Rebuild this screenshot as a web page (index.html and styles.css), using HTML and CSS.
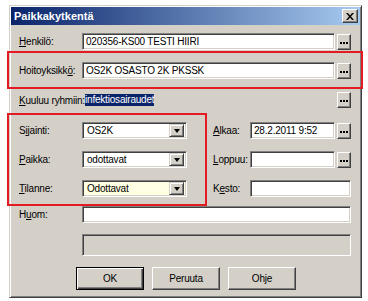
FILE: index.html
```html
<!DOCTYPE html>
<html lang="fi">
<head>
  <meta charset="UTF-8">
  <meta name="viewport" content="width=device-width, initial-scale=1.0">
  <title>Paikkakytkentä</title>
  <link rel="stylesheet" href="styles.css">
</head>
<body>
  <div class="dialog">
    <div class="titlebar">
      <span class="title">Paikkakytkentä</span>
      <span class="close-btn">
        <svg width="8" height="7" viewBox="0 0 8 7"><path d="M0 0h2l2 2.5L6 0h2L5 3.5 8 7H6L4 4.5 2 7H0l3-3.5z" fill="#000"/></svg>
      </span>
    </div>

    <div class="content">
      <div class="row row-1">
        <span class="lbl"><u>H</u>enkilö:</span>
        <div class="field grow">020356-KS00 TESTI HIIRI</div>
        <div class="dots-btn"><svg width="8" height="2"><rect x="0" width="2" height="2"/><rect x="3" width="2" height="2"/><rect x="6" width="2" height="2"/></svg></div>
      </div>

      <div class="row row-2">
        <span class="lbl">Hoitoyksikk<u>ö</u>:</span>
        <div class="field grow">OS2K OSASTO 2K PKSSK</div>
        <div class="dots-btn"><svg width="8" height="2"><rect x="0" width="2" height="2"/><rect x="3" width="2" height="2"/><rect x="6" width="2" height="2"/></svg></div>
      </div>

      <div class="row row-3">
        <span class="lbl"><u>K</u>uuluu ryhmiin:</span>
        <div class="plain grow"><span class="selected">infektiosairaudet</span></div>
        <div class="dots-btn"><svg width="8" height="2"><rect x="0" width="2" height="2"/><rect x="3" width="2" height="2"/><rect x="6" width="2" height="2"/></svg></div>
      </div>

      <div class="row row-4">
        <span class="lbl">S<u>i</u>jainti:</span>
        <div class="combo"><span class="combo-text">OS2K</span><span class="arrow-btn"><span class="arrow"></span></span></div>
        <span class="lbl lbl-right"><u>A</u>lkaa:</span>
        <div class="field grow">28.2.2011 9:52</div>
        <div class="dots-btn"><svg width="8" height="2"><rect x="0" width="2" height="2"/><rect x="3" width="2" height="2"/><rect x="6" width="2" height="2"/></svg></div>
      </div>

      <div class="row row-5">
        <span class="lbl"><u>P</u>aikka:</span>
        <div class="combo"><span class="combo-text">odottavat</span><span class="arrow-btn"><span class="arrow"></span></span></div>
        <span class="lbl lbl-right"><u>L</u>oppuu:</span>
        <div class="field grow"></div>
        <div class="dots-btn"><svg width="8" height="2"><rect x="0" width="2" height="2"/><rect x="3" width="2" height="2"/><rect x="6" width="2" height="2"/></svg></div>
      </div>

      <div class="row row-6">
        <span class="lbl"><u>T</u>ilanne:</span>
        <div class="combo combo-yellow"><span class="combo-text">Odottavat</span><span class="arrow-btn"><span class="arrow"></span></span></div>
        <span class="lbl lbl-right">K<u>e</u>sto:</span>
        <div class="field grow"></div>
      </div>

      <div class="row row-7">
        <span class="lbl">H<u>u</u>om:</span>
        <div class="field grow"></div>
      </div>

      <div class="row row-8">
        <span class="lbl"></span>
        <div class="field field-disabled grow"></div>
      </div>

      <div class="buttons">
        <div class="btn btn-default"><span>OK</span></div>
        <div class="btn"><span>Peruuta</span></div>
        <div class="btn"><span>Ohje</span></div>
      </div>
    </div>
  </div>

  <div class="mark mark-1"></div>
  <div class="mark mark-2"></div>
</body>
</html>
```

FILE: styles.css
```css
body {
  margin: 0;
  padding: 0;
  background-color: #fff;
  font-family: "Liberation Sans", Arial, sans-serif;
  font-size: 10px;
  color: #000;
}

.dialog {
  width: 353px;
  height: 293px;
  margin: 5px 0 0 9px;
  box-sizing: border-box;
  padding: 1px;
  background-color: #d4d0c8;
  border: 1px solid;
  border-color: #d4d0c8 #404040 #404040 #d4d0c8;
  box-shadow: inset 1px 1px #fff, inset -1px -1px #808080;
}

.titlebar {
  height: 18px;
  display: flex;
  align-items: center;
  justify-content: space-between;
  padding: 0 2px 0 3px;
  background: linear-gradient(to right, #0a246a, #a6caf0);
}

.title {
  color: #fff;
  font-weight: bold;
  font-size: 11px;
}

.close-btn {
  width: 16px;
  height: 14px;
  box-sizing: border-box;
  display: flex;
  align-items: center;
  justify-content: center;
  background-color: #d4d0c8;
  border: 1px solid;
  border-color: #fff #404040 #404040 #fff;
  box-shadow: inset -1px -1px #808080;
}

.content {
  padding: 0 9px 0 8px;
  letter-spacing: -0.2px;
}

.row {
  display: flex;
  align-items: center;
  height: 17px;
}

.row-1 { margin-top: 8px; }
.row-2 { margin-top: 12px; }
.row-3 { margin-top: 13px; height: 16px; }
.row-4 { margin-top: 14px; }
.row-5 { margin-top: 12px; }
.row-6 { margin-top: 12px; }
.row-7 { margin-top: 9px; }
.row-8 { margin-top: 11px; height: 22px; }

.lbl {
  width: 63px;
  flex: none;
  white-space: nowrap;
}

.lbl-right {
  width: 37px;
  margin-left: 26px;
}

.grow {
  flex: 1;
}

.field {
  height: 17px;
  box-sizing: border-box;
  padding: 2px 3px 0;
  background-color: #fff;
  border: 1px solid;
  border-color: #808080 #fff #fff #808080;
  box-shadow: inset 1px 1px #404040, inset -1px -1px #d4d0c8;
  white-space: nowrap;
  overflow: hidden;
}

.row-8 .field {
  height: 22px;
}

.field-disabled {
  background-color: #d4d0c8;
}

.plain {
  height: 16px;
  display: flex;
  align-items: center;
  padding-left: 3px;
}

.selected {
  background-color: #0a246a;
  color: #fff;
  line-height: 12px;
}

.dots-btn {
  width: 14px;
  height: 16px;
  flex: none;
  margin-left: 2px;
  box-sizing: border-box;
  display: flex;
  align-items: center;
  justify-content: center;
  padding-top: 2px;
  background-color: #d4d0c8;
  border: 1px solid;
  border-color: #fff #404040 #404040 #fff;
  box-shadow: inset -1px -1px #808080;
}

.combo {
  width: 105px;
  height: 17px;
  flex: none;
  box-sizing: border-box;
  display: flex;
  align-items: center;
  padding: 2px;
  background-color: #fff;
  border: 1px solid;
  border-color: #808080 #fff #fff #808080;
  box-shadow: inset 1px 1px #404040, inset -1px -1px #d4d0c8;
}

.combo-yellow {
  background-color: #ffffe3;
}

.combo-text {
  flex: 1;
  padding-left: 2px;
}

.arrow-btn {
  width: 15px;
  height: 13px;
  box-sizing: border-box;
  display: flex;
  align-items: center;
  justify-content: center;
  background-color: #d4d0c8;
  border: 1px solid;
  border-color: #d4d0c8 #404040 #404040 #d4d0c8;
  box-shadow: inset 1px 1px #fff, inset -1px -1px #808080;
}

.arrow {
  width: 0;
  height: 0;
  border-left: 3.5px solid transparent;
  border-right: 3.5px solid transparent;
  border-top: 4px solid #000;
}

.buttons {
  display: flex;
  gap: 8px;
  margin-top: 11px;
  padding-left: 57px;
}

.btn {
  width: 68px;
  height: 23px;
  box-sizing: border-box;
  display: flex;
  align-items: center;
  justify-content: center;
  background-color: #d4d0c8;
  border: 1px solid;
  border-color: #fff #404040 #404040 #fff;
  box-shadow: inset -1px -1px #808080;
}

.btn-default {
  border: 1px solid #000;
  box-shadow: inset 1px 1px #fff, inset -1px -1px #404040, inset -2px -2px #808080;
}

.mark {
  position: absolute;
  box-sizing: border-box;
  border: 2px solid #e31b23;
}

.mark-1 {
  left: 7px;
  top: 51px;
  width: 356px;
  height: 38px;
}

.mark-2 {
  left: 7px;
  top: 113px;
  width: 200px;
  height: 93px;
}
```
